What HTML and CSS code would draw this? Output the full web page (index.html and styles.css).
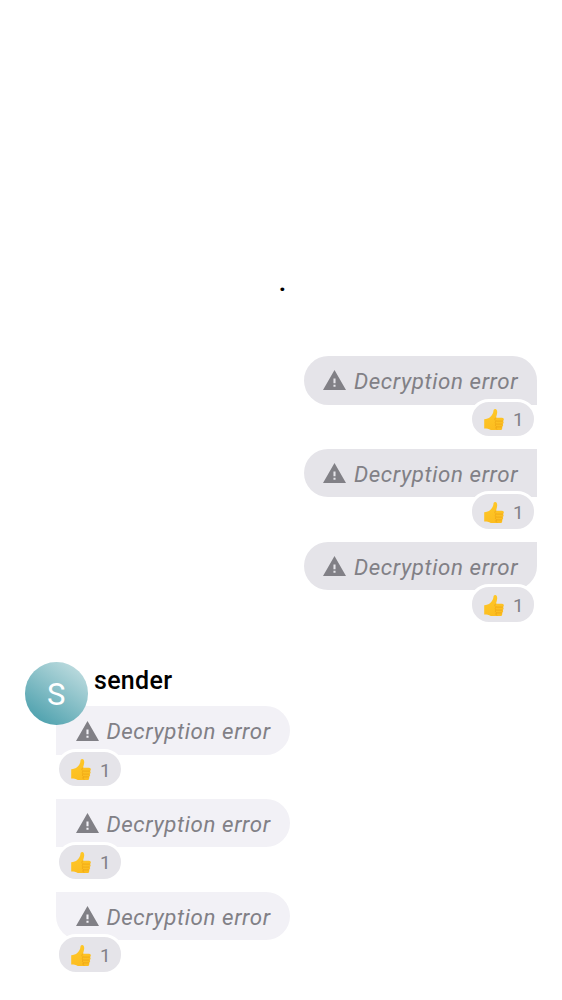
FILE: index.html
```
<!DOCTYPE html>
<html lang="en">
<head>
<meta charset="utf-8">
<title>Timeline</title>
<link rel="stylesheet" href="styles.css">
</head>
<body>
<svg class="defs" width="0" height="0" aria-hidden="true">
  <defs>
    <linearGradient id="thumb-fill" x1="0" y1="0" x2="0.3" y2="1">
      <stop offset="0" stop-color="#ffc928"/>
      <stop offset="1" stop-color="#fcbd20"/>
    </linearGradient>
    <symbol id="warning" viewBox="1 2 22 19">
      <path d="M1 21h22L12 2 1 21zm12-3h-2v-2h2v2zm0-3.300h-2v-4.700h2v4.700z"/>
    </symbol>
    <symbol id="thumb" viewBox="0 0 20 21">
      <path fill="url(#thumb-fill)" d="M.2 10.2C2.600 10 4.700 9.400 6.200 8C7.900 6.400 9.300 4.400 9.400 2.300C9.500.7 10.200 0 11.200.1c1.600.2 2.100 1.600 2 3.500-.1 1.800-.8 3.600-1.200 5.200h6c1.400 0 1.900.9 1.800 1.700 0 .9-.5 1.400-1.100 1.600.7.3 1 .8.9 1.500 0 .8-.5 1.300-1.200 1.500.6.3.8.7.7 1.300-.1.8-.6 1.200-1.200 1.400.4.3.5.7.4 1.200-.2 1.800-1.300 2.500-3 2.700-3.300.3-6.300.1-8.500-.8-2.300-1-4.300-1.500-6.600-1.400z"/>
      <path fill="none" stroke="#e89a10" stroke-width=".55" stroke-linecap="round" d="M12 8.800c-1.300.3-1.500 1.600-.8 2.600M12.500 12.100h6.200M12.500 15.100h6M12.500 17.900h5M11.900 12c-1 .8-.9 2.200.1 2.900-.9.9-.7 2.200.4 2.900-.8.8-.5 1.900.4 2.600"/>
    </symbol>
  </defs>
</svg>
<main class="timeline">
  <p class="dot">.</p>
  <section class="group sent">
    <article class="message">
      <div class="bubble first"><svg class="warn"><use href="#warning"/></svg><span>Decryption error</span></div>
      <div class="reaction"><svg class="thumb"><use href="#thumb"/></svg><span>1</span></div>
    </article>
    <article class="message">
      <div class="bubble middle"><svg class="warn"><use href="#warning"/></svg><span>Decryption error</span></div>
      <div class="reaction"><svg class="thumb"><use href="#thumb"/></svg><span>1</span></div>
    </article>
    <article class="message">
      <div class="bubble last"><svg class="warn"><use href="#warning"/></svg><span>Decryption error</span></div>
      <div class="reaction"><svg class="thumb"><use href="#thumb"/></svg><span>1</span></div>
    </article>
  </section>
  <section class="group received">
    <header class="sender"><span class="avatar">S</span><span class="name">sender</span></header>
    <article class="message">
      <div class="bubble middle"><svg class="warn"><use href="#warning"/></svg><span>Decryption error</span></div>
      <div class="reaction"><svg class="thumb"><use href="#thumb"/></svg><span>1</span></div>
    </article>
    <article class="message">
      <div class="bubble middle"><svg class="warn"><use href="#warning"/></svg><span>Decryption error</span></div>
      <div class="reaction"><svg class="thumb"><use href="#thumb"/></svg><span>1</span></div>
    </article>
    <article class="message">
      <div class="bubble last"><svg class="warn"><use href="#warning"/></svg><span>Decryption error</span></div>
      <div class="reaction"><svg class="thumb"><use href="#thumb"/></svg><span>1</span></div>
    </article>
  </section>
</main>
</body>
</html>
```
FILE: styles.css
```
* { box-sizing: border-box; }
body {
  margin: 0;
  background: #fff;
  color: #000;
  font-family: Roboto, sans-serif;
}
.defs { display: block; }
.timeline {
  display: flex;
  flex-direction: column;
  height: 1000px;
  padding: 267px 25px 0;
}
.dot {
  margin: 0 0 59.2px;
  height: 30px;
  padding-left: 3px;
  text-align: center;
  font-size: 26px;
  font-weight: 600;
  line-height: 30px;
}
.group {
  display: flex;
  flex-direction: column;
  gap: 9.2px;
}
.message {
  display: flex;
  flex-direction: column;
  height: 83.5px;
}
.sent { align-items: flex-end; }
.sent .message { align-items: flex-end; }
.received {
  margin-top: 37.3px;
  padding-left: 31px;
}
.received .message { align-items: flex-start; }
.bubble {
  display: flex;
  align-items: center;
  gap: 8px;
  width: 233.5px;
  height: 48.4px;
  padding-left: 19.5px;
  color: #818086;
  font-size: 22.3px;
  font-style: italic;
  font-weight: 385;
  letter-spacing: 0.6px;
  line-height: 30px;
  white-space: nowrap;
}
.bubble span { padding-top: 1.5px; }
.sent .bubble { background: #e5e4e9; border-radius: 25px 0 0 25px; }
.received .bubble { background: #f2f1f6; border-radius: 0 25px 25px 0; }
.sent .first { border-top-right-radius: 25px; }
.sent .last { border-bottom-right-radius: 25px; }
.received .last { border-bottom-left-radius: 25px; }
.warn {
  flex: none;
  width: 23px;
  height: 20px;
  fill: #818086;
}
.reaction {
  display: flex;
  align-items: center;
  gap: 9.3px;
  z-index: 1;
  width: 68px;
  height: 40.5px;
  margin-top: -5.9px;
  padding-left: 11.7px;
  border: 3px solid #fff;
  border-radius: 20px;
  background: #e5e4e9;
  color: #818086;
  font-size: 19px;
  font-weight: 385;
  line-height: 24px;
}
.reaction span { padding-top: 3px; }
.thumb {
  flex: none;
  width: 20px;
  height: 21px;
  margin-top: 1.5px;
}
.sender {
  display: flex;
  gap: 6.5px;
  height: 44px;
  margin: 0 0 -9.2px -31px;
}
.avatar {
  z-index: 2;
  flex: none;
  width: 62.5px;
  height: 62.5px;
  border-radius: 50%;
  background: linear-gradient(35deg, #4a9fac 8%, #c0dde0 92%);
  color: #fff;
  font-size: 31px;
  line-height: 66.5px;
  text-align: center;
}
.name {
  padding-top: 3.8px;
  font-size: 25px;
  font-weight: 500;
  letter-spacing: 0.3px;
  line-height: 30px;
}
```
